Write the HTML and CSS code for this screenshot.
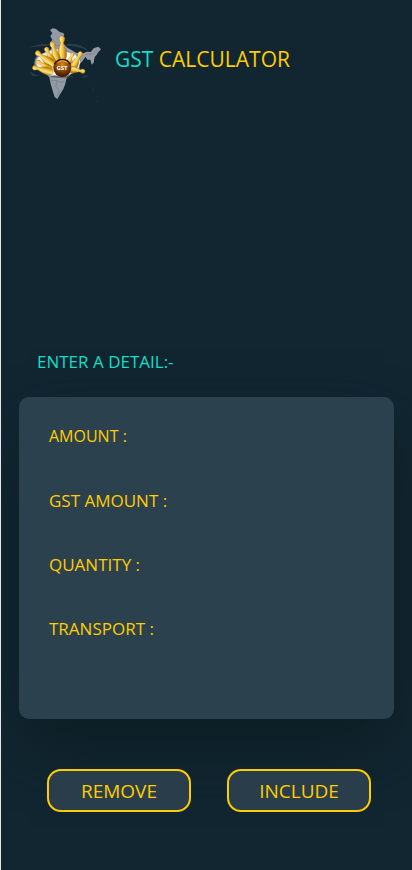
FILE: index.html
```html
<!DOCTYPE html>
<html lang="en">
<head>
<meta charset="utf-8">
<meta name="viewport" content="width=device-width, initial-scale=1">
<title>GST Calculator</title>
<link rel="stylesheet" href="styles.css">
</head>
<body>
<header class="header">
  <svg class="logo" viewBox="0 0 270 270" aria-hidden="true">
    <defs>
      <linearGradient id="gold" x1="0" y1="0" x2="1" y2="0">
        <stop offset="0" stop-color="#c98a10"/><stop offset=".35" stop-color="#ffe690"/><stop offset=".65" stop-color="#eeb525"/><stop offset="1" stop-color="#9b6405"/>
      </linearGradient>
      <radialGradient id="ball" cx=".5" cy=".3" r=".7">
        <stop offset="0" stop-color="#d98a16"/><stop offset=".5" stop-color="#8c4707"/><stop offset="1" stop-color="#351404"/>
      </radialGradient>
      <radialGradient id="glow"><stop offset="0" stop-color="#fff"/><stop offset=".85" stop-color="#fffaf0" stop-opacity=".95"/><stop offset="1" stop-color="#fff" stop-opacity="0"/></radialGradient>
      <path id="pin" d="M-4-30C-10-37-8-46 0-46S10-37 4-30C4-18 12-12 12 2 12 14 7 21 0 21S-12 14-12 2C-12-12-4-18-4-30Z"/>
    </defs>
    <path fill="#2a3e4a" d="M28 83Q60 68 92 73L74 79Q48 77 28 83ZM140 72Q180 67 205 92Q175 78 140 77ZM28 153Q42 166 65 168L38 169ZM185 171L205 164 195 174ZM218 195L222 213 219 210ZM228 241L232 247 227 244Z"/>
    <path fill="#929aa4" d="M90 30L98 25 108 27 119 36 130 39 133 44 127 53 133 62 129 69 142 83 156 91 168 98 190 100 200 95 212 96 221 85 235 80 243 88 235 96 229 106 224 111 221 128 215 134 211 119 202 119 197 110 187 124 177 135 164 150 151 164 139 176 136 191 130 207 119 225 112 237 104 231 98 212 92 192 88 172 78 162 68 150 76 143 71 134 81 119 88 98 96 80 89 68 97 60 91 48 97 39Z"/>
    <path fill="none" stroke="#69747f" stroke-width="1.5" d="M100 65L108 78 122 74 132 88 145 95M94 182L111 182 123 188 134 183M111 183L107 200 119 211 111 230M198 103L220 102 232 90"/>
    <path fill="url(#glow)" d="M46 108L72 98 92 88 118 86 140 96 166 104 180 122 178 144 190 158 166 170 84 170 52 158 40 138Z"/>
    <g fill="url(#gold)" stroke="#a66b08" stroke-width="1">
      <use href="#pin" transform="translate(126 101) scale(1.15)"/>
      <use href="#pin" transform="translate(108 113) rotate(-15) scale(1.05)"/>
      <use href="#pin" transform="translate(95 122) rotate(-24) scale(.95)"/>
      <use href="#pin" transform="translate(86 124) rotate(-53) scale(1.05)"/>
      <use href="#pin" transform="translate(146 128) rotate(25) scale(.7)"/>
      <use href="#pin" transform="translate(163 134) rotate(29) scale(.95)"/>
      <use href="#pin" transform="translate(82 142) rotate(-59) scale(.8)"/>
      <use href="#pin" transform="translate(80 152) rotate(-76) scale(.95)"/>
      <use href="#pin" transform="translate(155 148) rotate(100) scale(.88)"/>
    </g>
    <ellipse fill="#40342b" opacity=".55" cx="126" cy="170" rx="35" ry="4"/>
    <circle cx="127" cy="144" r="27" fill="url(#ball)"/>
    <path fill="none" stroke="#201509" stroke-width="4" d="M103 133A27 27 0 0 1 151 133"/>
    <path fill="none" stroke="#efb335" stroke-width="3" d="M113 128Q127 117 143 128"/>
    <text class="logo-text" x="126" y="150" text-anchor="middle">GST</text>
  </svg>
  <h1 class="title"><span class="accent">GST</span> CALCULATOR</h1>
</header>
<main class="main">
  <form class="form">
    <h2 class="subtitle">ENTER A DETAIL:-</h2>
    <div class="card">
      <div class="row row-small"><label for="amount">AMOUNT :</label><input id="amount" type="text" inputmode="decimal"></div>
      <div class="row"><label for="gst">GST AMOUNT :</label><input id="gst" type="text" inputmode="decimal"></div>
      <div class="row"><label for="quantity">QUANTITY :</label><input id="quantity" type="text" inputmode="numeric"></div>
      <div class="row"><label for="transport">TRANSPORT :</label><input id="transport" type="text" inputmode="decimal"></div>
    </div>
    <div class="actions">
      <button type="button">REMOVE</button>
      <button type="button">INCLUDE</button>
    </div>
  </form>
</main>
</body>
</html>
```
FILE: styles.css
```css
* { box-sizing: border-box; }
body {
  margin: 0;
  min-height: 100vh;
  border-left: 1px solid #e4e8ea;
  background: #112631;
  color: #fc0;
  font-family: "Segoe UI", "Open Sans", "Noto Sans", sans-serif;
}
.header {
  display: flex;
  align-items: center;
  gap: 5px;
  padding: 20px 20px 0 19px;
}
.logo { width: 90px; height: 90px; flex: none; }
.logo-text { font: bold 18px "Open Sans", sans-serif; fill: #fff; }
.title {
  margin: 0 0 12px;
  font-size: 21px;
  line-height: 32px;
  font-weight: 400;
}
.accent { color: #11dfc8; }
.main { padding: 236px 18px 56px; }
.subtitle {
  margin: 0 0 20px;
  padding-left: 18px;
  color: #11dfc8;
  font-size: 17px;
  line-height: 31px;
  font-weight: 400;
}
.card {
  display: grid;
  gap: 24px;
  padding: 19px 30px 71px;
  border-radius: 10px;
  background: #2c414e;
  box-shadow: 0 30px 60px -10px #0d1c20;
}
.row {
  display: flex;
  align-items: center;
  gap: 12px;
  height: 40px;
  font-size: 17px;
}
.row-small { font-size: 16px; }
.row input {
  flex: 1;
  min-width: 0;
  height: 32px;
  padding: 0;
  border: 0;
  outline: 0;
  background: transparent;
  color: inherit;
  font: inherit;
}
.actions {
  display: grid;
  grid-template-columns: 1fr 1fr;
  gap: 36px;
  padding: 50px 23px 0 28px;
}
.actions button {
  height: 43px;
  padding: 0;
  border: 2px solid #fc0;
  border-radius: 14px;
  background: #293e4a;
  color: #fc0;
  font: 400 19px "Segoe UI", "Open Sans", "Noto Sans", sans-serif;
}
```
